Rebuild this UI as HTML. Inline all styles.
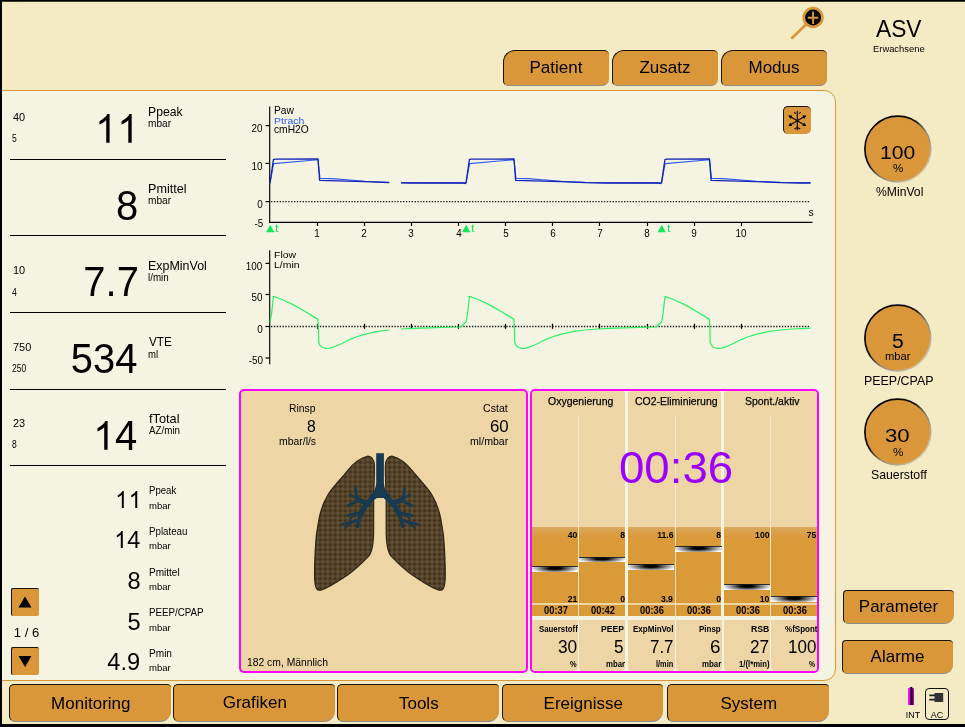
<!DOCTYPE html>
<html><head><meta charset="utf-8"><title>Ventilator</title>
<style>
html,body{margin:0;padding:0;}
body{width:965px;height:727px;overflow:hidden;background:#F4EAC4;font-family:"Liberation Sans",sans-serif;color:#000;position:relative;}
#root{position:absolute;left:0;top:0;width:965px;height:727px;will-change:transform;}
.t{position:absolute;line-height:1;white-space:nowrap;}
.a{position:absolute;}
.btn{position:absolute;box-sizing:border-box;background:#D9973A;border-top:1px solid #1a1408;border-left:1px solid #1a1408;border-right:0 solid #D9973A;border-bottom:1px solid #8f8d88;}
svg{position:absolute;overflow:visible;}
svg.one{position:static;display:inline-block;width:0.5562em;height:0.6904em;vertical-align:baseline;}
</style></head><body><div id="root">
<div class="a" style="left:0;top:0;width:965px;height:2px;background:linear-gradient(to bottom,#000 0,#000 50%,#3d3a2e 50%,#3d3a2e 100%)"></div>
<div class="a" style="left:0;top:0;width:2px;height:727px;background:#000"></div>
<div class="a" style="left:0;top:724px;width:965px;height:3px;background:#000"></div>
<div class="a" style="left:-8px;top:90px;width:842px;height:589px;background:#F5F4E2;border:1px solid #D9973A;border-radius:0 12px 12px 0;"></div>
<div class="a" style="left:0;top:88px;width:2px;height:600px;background:#000"></div>
<div class="btn" style="left:503px;top:50px;width:106px;height:36px;border-radius:12px 5px 7px 5px;"></div>
<div class="t" style="top:59.00px;font-size:17.00px;left:556.00px;transform:translateX(-50%);transform-origin:50% 50%;">Patient</div>
<div class="btn" style="left:612px;top:50px;width:106px;height:36px;border-radius:12px 5px 7px 5px;"></div>
<div class="t" style="top:59.00px;font-size:17.00px;left:665.00px;transform:translateX(-50%);transform-origin:50% 50%;">Zusatz</div>
<div class="btn" style="left:721px;top:50px;width:106px;height:36px;border-radius:12px 5px 7px 5px;"></div>
<div class="t" style="top:59.00px;font-size:17.00px;left:774.00px;transform:translateX(-50%);transform-origin:50% 50%;">Modus</div>
<div class="btn" style="left:843px;top:590px;width:111px;height:34px;border-radius:4px 4px 9px 5px;"></div>
<div class="t" style="top:598.00px;font-size:17.00px;left:898.50px;transform:translateX(-50%);transform-origin:50% 50%;">Parameter</div>
<div class="btn" style="left:842px;top:640px;width:111px;height:34px;border-radius:4px 4px 9px 5px;"></div>
<div class="t" style="top:648.00px;font-size:17.00px;left:897.50px;transform:translateX(-50%);transform-origin:50% 50%;">Alarme</div>
<div class="btn" style="left:9px;top:684px;width:162px;height:38px;border-radius:5px 4px 11px 6px;"></div>
<div class="t" style="top:695.00px;font-size:17.00px;left:90.80px;transform:translateX(-50%);transform-origin:50% 50%;">Monitoring</div>
<div class="btn" style="left:173px;top:684px;width:162px;height:38px;border-radius:5px 4px 11px 6px;"></div>
<div class="t" style="top:694.00px;font-size:17.00px;left:254.80px;transform:translateX(-50%);transform-origin:50% 50%;">Grafiken</div>
<div class="btn" style="left:337px;top:684px;width:162px;height:38px;border-radius:5px 4px 11px 6px;"></div>
<div class="t" style="top:695.00px;font-size:17.00px;left:418.80px;transform:translateX(-50%);transform-origin:50% 50%;">Tools</div>
<div class="btn" style="left:502px;top:684px;width:161px;height:38px;border-radius:5px 4px 11px 6px;"></div>
<div class="t" style="top:695.00px;font-size:17.00px;left:583.30px;transform:translateX(-50%);transform-origin:50% 50%;">Ereignisse</div>
<div class="btn" style="left:667px;top:684px;width:162px;height:38px;border-radius:5px 4px 11px 6px;"></div>
<div class="t" style="top:695.00px;font-size:17.00px;left:748.80px;transform:translateX(-50%);transform-origin:50% 50%;">System</div>
<div class="t" style="top:108.00px;font-size:41.64px;right:825.36px;transform:scaleX(0.960);transform-origin:100% 50%;"><svg class="one" viewBox="0 0 1139 1472"><path transform="translate(0,1472) scale(1,-1)" d="M763 0H583V1147Q518 1085 412.5 1023T223 930V1104Q374 1175 487 1276T647 1472H763Z"/></svg><svg class="one" viewBox="0 0 1139 1472"><path transform="translate(0,1472) scale(1,-1)" d="M763 0H583V1147Q518 1085 412.5 1023T223 930V1104Q374 1175 487 1276T647 1472H763Z"/></svg></div>
<div class="t" style="top:106.00px;font-size:12.83px;left:147.70px;transform:scaleX(0.950);transform-origin:0 50%;">Ppeak</div>
<div class="t" style="top:118.00px;font-size:11.04px;left:148.03px;transform:scaleX(0.916);transform-origin:0 50%;">mbar</div>
<div class="t" style="top:112.00px;font-size:11.40px;left:12.60px;transform:scaleX(0.960);transform-origin:0 50%;">40</div>
<div class="t" style="top:133.00px;font-size:11.40px;left:12.20px;transform:scaleX(0.750);transform-origin:0 50%;">5</div>
<div class="t" style="top:185.00px;font-size:41.64px;right:826.96px;transform:scaleX(0.960);transform-origin:100% 50%;">8</div>
<div class="t" style="top:183.00px;font-size:12.83px;left:147.67px;transform:scaleX(0.981);transform-origin:0 50%;">Pmittel</div>
<div class="t" style="top:195.00px;font-size:11.04px;left:148.03px;transform:scaleX(0.916);transform-origin:0 50%;">mbar</div>
<div class="t" style="top:261.00px;font-size:41.64px;right:825.89px;transform:scaleX(0.960);transform-origin:100% 50%;">7.7</div>
<div class="t" style="top:260.00px;font-size:12.83px;left:147.68px;transform:scaleX(0.971);transform-origin:0 50%;">ExpMinVol</div>
<div class="t" style="top:272.00px;font-size:11.04px;left:148.04px;transform:scaleX(0.888);transform-origin:0 50%;">l/min</div>
<div class="t" style="top:265.00px;font-size:11.40px;left:12.60px;transform:scaleX(0.960);transform-origin:0 50%;">10</div>
<div class="t" style="top:287.00px;font-size:11.40px;left:12.20px;transform:scaleX(0.750);transform-origin:0 50%;">4</div>
<div class="t" style="top:338.00px;font-size:41.64px;right:827.53px;transform:scaleX(0.960);transform-origin:100% 50%;">534</div>
<div class="t" style="top:335.00px;font-size:13.52px;left:148.65px;transform:scaleX(0.866);transform-origin:0 50%;">VTE</div>
<div class="t" style="top:349.00px;font-size:11.04px;left:148.07px;transform:scaleX(0.865);transform-origin:0 50%;">ml</div>
<div class="t" style="top:342.00px;font-size:11.40px;left:12.60px;transform:scaleX(0.960);transform-origin:0 50%;">750</div>
<div class="t" style="top:363.00px;font-size:11.40px;left:12.20px;transform:scaleX(0.750);transform-origin:0 50%;">250</div>
<div class="t" style="top:415.00px;font-size:41.64px;right:827.53px;transform:scaleX(0.960);transform-origin:100% 50%;"><svg class="one" viewBox="0 0 1139 1472"><path transform="translate(0,1472) scale(1,-1)" d="M763 0H583V1147Q518 1085 412.5 1023T223 930V1104Q374 1175 487 1276T647 1472H763Z"/></svg>4</div>
<div class="t" style="top:413.00px;font-size:12.83px;left:148.52px;transform:scaleX(0.995);transform-origin:0 50%;">fTotal</div>
<div class="t" style="top:425.00px;font-size:11.04px;left:148.68px;transform:scaleX(0.888);transform-origin:0 50%;">AZ/min</div>
<div class="t" style="top:418.00px;font-size:11.40px;left:12.60px;transform:scaleX(0.960);transform-origin:0 50%;">23</div>
<div class="t" style="top:439.00px;font-size:11.40px;left:12.20px;transform:scaleX(0.750);transform-origin:0 50%;">8</div>
<div class="a" style="left:10px;top:159px;width:216px;height:1px;background:#000"></div>
<div class="a" style="left:10px;top:235px;width:216px;height:1px;background:#000"></div>
<div class="a" style="left:10px;top:312px;width:216px;height:1px;background:#000"></div>
<div class="a" style="left:10px;top:389px;width:216px;height:1px;background:#000"></div>
<div class="a" style="left:10px;top:465px;width:216px;height:1px;background:#000"></div>
<div class="t" style="top:488.00px;font-size:24.57px;right:823.77px;transform:scaleX(0.960);transform-origin:100% 50%;"><svg class="one" viewBox="0 0 1139 1472"><path transform="translate(0,1472) scale(1,-1)" d="M763 0H583V1147Q518 1085 412.5 1023T223 930V1104Q374 1175 487 1276T647 1472H763Z"/></svg><svg class="one" viewBox="0 0 1139 1472"><path transform="translate(0,1472) scale(1,-1)" d="M763 0H583V1147Q518 1085 412.5 1023T223 930V1104Q374 1175 487 1276T647 1472H763Z"/></svg></div>
<div class="t" style="top:486.00px;font-size:10.35px;left:148.61px;transform:scaleX(0.929);transform-origin:0 50%;">Ppeak</div>
<div class="t" style="top:501.00px;font-size:9.80px;left:148.66px;transform:scaleX(0.976);transform-origin:0 50%;">mbar</div>
<div class="t" style="top:528.00px;font-size:24.57px;right:824.71px;transform:scaleX(0.960);transform-origin:100% 50%;"><svg class="one" viewBox="0 0 1139 1472"><path transform="translate(0,1472) scale(1,-1)" d="M763 0H583V1147Q518 1085 412.5 1023T223 930V1104Q374 1175 487 1276T647 1472H763Z"/></svg>4</div>
<div class="t" style="top:527.00px;font-size:10.35px;left:148.60px;transform:scaleX(0.941);transform-origin:0 50%;">Pplateau</div>
<div class="t" style="top:541.00px;font-size:9.80px;left:148.66px;transform:scaleX(0.976);transform-origin:0 50%;">mbar</div>
<div class="t" style="top:569.00px;font-size:24.57px;right:824.48px;transform:scaleX(0.960);transform-origin:100% 50%;">8</div>
<div class="t" style="top:568.00px;font-size:10.35px;left:148.58px;transform:scaleX(0.970);transform-origin:0 50%;">Pmittel</div>
<div class="t" style="top:582.00px;font-size:9.80px;left:148.66px;transform:scaleX(0.976);transform-origin:0 50%;">mbar</div>
<div class="t" style="top:610.00px;font-size:24.57px;right:824.51px;transform:scaleX(0.960);transform-origin:100% 50%;">5</div>
<div class="t" style="top:608.00px;font-size:10.35px;left:148.60px;transform:scaleX(0.944);transform-origin:0 50%;">PEEP/CPAP</div>
<div class="t" style="top:623.00px;font-size:9.80px;left:148.66px;transform:scaleX(0.976);transform-origin:0 50%;">mbar</div>
<div class="t" style="top:650.00px;font-size:24.57px;right:824.38px;transform:scaleX(0.960);transform-origin:100% 50%;">4.9</div>
<div class="t" style="top:649.00px;font-size:10.35px;left:148.57px;transform:scaleX(0.975);transform-origin:0 50%;">Pmin</div>
<div class="t" style="top:663.00px;font-size:9.80px;left:148.66px;transform:scaleX(0.976);transform-origin:0 50%;">mbar</div>
<div class="btn" style="left:11px;top:588px;width:28px;height:28px;border-radius:2px;border-bottom:0;"></div>
<div class="btn" style="left:11px;top:647px;width:28px;height:28px;border-radius:2px;border-bottom:0;"></div>
<svg style="left:11px;top:588px" width="28" height="28"><path d="M7.5 19.5 L20.5 19.5 L14 8.5 Z" fill="#000"/></svg>
<svg style="left:11px;top:647px" width="28" height="28"><path d="M7.5 9 L20.5 9 L14 20 Z" fill="#000"/></svg>
<div class="t" style="top:626.00px;font-size:13.00px;left:26.50px;transform:translateX(-50%);transform-origin:50% 50%;">1 / 6</div>
<svg style="left:0;top:0" width="965" height="727" viewBox="0 0 965 727"><g stroke="#000" stroke-width="1.15" fill="none"><path d="M269.7 106.5V222.6M269 222.4H812.5"/><path d="M269.7 250.3V364.3"/></g><g stroke="#000" stroke-width="1.2" fill="none"><path d="M265.5 125.6H269.5"/><path d="M265.5 163.4H269.5"/><path d="M265.5 201.6H269.5"/><path d="M265.5 263.4H269.5"/><path d="M265.5 294.5H269.5"/><path d="M265.5 326.5H269.5"/><path d="M265.5 358H269.5"/><path d="M317.5 222V226"/><path d="M317.5 323.8V328.8" stroke-width="1.25"/><path d="M364.5 222V226"/><path d="M364.5 323.8V328.8" stroke-width="1.25"/><path d="M411.5 222V226"/><path d="M411.5 323.8V328.8" stroke-width="1.25"/><path d="M458.5 222V226"/><path d="M458.5 323.8V328.8" stroke-width="1.25"/><path d="M505.5 222V226"/><path d="M505.5 323.8V328.8" stroke-width="1.25"/><path d="M552.5 222V226"/><path d="M552.5 323.8V328.8" stroke-width="1.25"/><path d="M599.5 222V226"/><path d="M599.5 323.8V328.8" stroke-width="1.25"/><path d="M647.5 222V226"/><path d="M647.5 323.8V328.8" stroke-width="1.25"/><path d="M694.5 222V226"/><path d="M694.5 323.8V328.8" stroke-width="1.25"/><path d="M741.5 222V226"/><path d="M741.5 323.8V328.8" stroke-width="1.25"/></g><path d="M271 201.6H810.5" stroke="#1c1c1c" stroke-width="1.3" stroke-dasharray="1.4 1.47" fill="none"/><path d="M271 326.5H810.5" stroke="#1c1c1c" stroke-width="1.3" stroke-dasharray="1.4 1.47" fill="none"/><defs><clipPath id="c1"><rect x="269" y="100" width="120.19999999999999" height="280"/></clipPath><clipPath id="c2"><rect x="401" y="100" width="409.5" height="280"/></clipPath></defs><g clip-path="url(#c1)" fill="none" stroke-linejoin="round"><path d="M270.0 183.2 L273.6 163.6 L318.0 159.7 L320.0 178.4 L332.0 178.6 L365.0 181.3 L389.0 182.4 L410.0 182.8 L466.0 182.9" stroke="#2E5CF0" stroke-width="1.1"/><path d="M270.0 183.2 L273.4 159.6 L275.0 159.1 L318.0 159 L319.6 180.3 L365.0 181.6 L389.0 182.6 L410.0 183 L463.0 183 L466.0 183.6" stroke="#1420B4" stroke-width="1.3"/><path d="M270.0 322.3 L271.5 314 L273.5 296.3 L282.0 299.5 L291.0 303.6 L298.0 307.4 L305.5 311.8 L312.0 315.6 L317.9 319.4 L318.4 330 L318.7 342.3 L320.0 345.5 L322.5 347.5 L325.8 348.4 L330.0 348.1 L334.5 346.7 L342.0 343.5 L349.0 339.8 L356.0 337 L363.6 334.6 L371.0 332.8 L378.0 331.4 L389.0 330 L401.2 329 L414.0 328.3 L435.0 327.6 L459.0 327 L461.5 326.3 L465.5 322.5 L466.0 322.3" stroke="#2CF268" stroke-width="1.25"/><path d="M466.0 183.2 L469.6 163.6 L514.0 159.7 L516.0 178.4 L528.0 178.6 L561.0 181.3 L585.0 182.4 L606.0 182.8 L661.5 182.9" stroke="#2E5CF0" stroke-width="1.1"/><path d="M466.0 183.2 L469.4 159.6 L471.0 159.1 L514.0 159 L515.6 180.3 L561.0 181.6 L585.0 182.6 L606.0 183 L658.5 183 L661.5 183.6" stroke="#1420B4" stroke-width="1.3"/><path d="M466.0 322.3 L467.5 314 L469.5 296.3 L478.0 299.5 L487.0 303.6 L494.0 307.4 L501.5 311.8 L508.0 315.6 L513.9 319.4 L514.4 330 L514.7 342.3 L516.0 345.5 L518.5 347.5 L521.8 348.4 L526.0 348.1 L530.5 346.7 L538.0 343.5 L545.0 339.8 L552.0 337 L559.6 334.6 L567.0 332.8 L574.0 331.4 L585.0 330 L597.2 329 L610.0 328.3 L631.0 327.6 L655.0 327 L657.0 326.3 L661.0 322.5 L661.5 322.3" stroke="#2CF268" stroke-width="1.25"/><path d="M661.5 183.2 L665.1 163.6 L709.5 159.7 L711.5 178.4 L723.5 178.6 L756.5 181.3 L780.5 182.4 L801.5 182.8 L857.0 182.9" stroke="#2E5CF0" stroke-width="1.1"/><path d="M661.5 183.2 L664.9 159.6 L666.5 159.1 L709.5 159 L711.1 180.3 L756.5 181.6 L780.5 182.6 L801.5 183 L854.0 183 L857.0 183.6" stroke="#1420B4" stroke-width="1.3"/><path d="M661.5 322.3 L663.0 314 L665.0 296.3 L673.5 299.5 L682.5 303.6 L689.5 307.4 L697.0 311.8 L703.5 315.6 L709.4 319.4 L709.9 330 L710.2 342.3 L711.5 345.5 L714.0 347.5 L717.3 348.4 L721.5 348.1 L726.0 346.7 L733.5 343.5 L740.5 339.8 L747.5 337 L755.1 334.6 L762.5 332.8 L769.5 331.4 L780.5 330 L792.7 329 L805.5 328.3 L826.5 327.6 L850.5 327 L852.5 326.3 L856.5 322.5 L857.0 322.3" stroke="#2CF268" stroke-width="1.25"/></g><g clip-path="url(#c2)" fill="none" stroke-linejoin="round"><path d="M270.0 183.2 L273.6 163.6 L318.0 159.7 L320.0 178.4 L332.0 178.6 L365.0 181.3 L389.0 182.4 L410.0 182.8 L466.0 182.9" stroke="#2E5CF0" stroke-width="1.1"/><path d="M270.0 183.2 L273.4 159.6 L275.0 159.1 L318.0 159 L319.6 180.3 L365.0 181.6 L389.0 182.6 L410.0 183 L463.0 183 L466.0 183.6" stroke="#1420B4" stroke-width="1.3"/><path d="M270.0 322.3 L271.5 314 L273.5 296.3 L282.0 299.5 L291.0 303.6 L298.0 307.4 L305.5 311.8 L312.0 315.6 L317.9 319.4 L318.4 330 L318.7 342.3 L320.0 345.5 L322.5 347.5 L325.8 348.4 L330.0 348.1 L334.5 346.7 L342.0 343.5 L349.0 339.8 L356.0 337 L363.6 334.6 L371.0 332.8 L378.0 331.4 L389.0 330 L401.2 329 L414.0 328.3 L435.0 327.6 L459.0 327 L461.5 326.3 L465.5 322.5 L466.0 322.3" stroke="#2CF268" stroke-width="1.25"/><path d="M466.0 183.2 L469.6 163.6 L514.0 159.7 L516.0 178.4 L528.0 178.6 L561.0 181.3 L585.0 182.4 L606.0 182.8 L661.5 182.9" stroke="#2E5CF0" stroke-width="1.1"/><path d="M466.0 183.2 L469.4 159.6 L471.0 159.1 L514.0 159 L515.6 180.3 L561.0 181.6 L585.0 182.6 L606.0 183 L658.5 183 L661.5 183.6" stroke="#1420B4" stroke-width="1.3"/><path d="M466.0 322.3 L467.5 314 L469.5 296.3 L478.0 299.5 L487.0 303.6 L494.0 307.4 L501.5 311.8 L508.0 315.6 L513.9 319.4 L514.4 330 L514.7 342.3 L516.0 345.5 L518.5 347.5 L521.8 348.4 L526.0 348.1 L530.5 346.7 L538.0 343.5 L545.0 339.8 L552.0 337 L559.6 334.6 L567.0 332.8 L574.0 331.4 L585.0 330 L597.2 329 L610.0 328.3 L631.0 327.6 L655.0 327 L657.0 326.3 L661.0 322.5 L661.5 322.3" stroke="#2CF268" stroke-width="1.25"/><path d="M661.5 183.2 L665.1 163.6 L709.5 159.7 L711.5 178.4 L723.5 178.6 L756.5 181.3 L780.5 182.4 L801.5 182.8 L857.0 182.9" stroke="#2E5CF0" stroke-width="1.1"/><path d="M661.5 183.2 L664.9 159.6 L666.5 159.1 L709.5 159 L711.1 180.3 L756.5 181.6 L780.5 182.6 L801.5 183 L854.0 183 L857.0 183.6" stroke="#1420B4" stroke-width="1.3"/><path d="M661.5 322.3 L663.0 314 L665.0 296.3 L673.5 299.5 L682.5 303.6 L689.5 307.4 L697.0 311.8 L703.5 315.6 L709.4 319.4 L709.9 330 L710.2 342.3 L711.5 345.5 L714.0 347.5 L717.3 348.4 L721.5 348.1 L726.0 346.7 L733.5 343.5 L740.5 339.8 L747.5 337 L755.1 334.6 L762.5 332.8 L769.5 331.4 L780.5 330 L792.7 329 L805.5 328.3 L826.5 327.6 L850.5 327 L852.5 326.3 L856.5 322.5 L857.0 322.3" stroke="#2CF268" stroke-width="1.25"/></g><path d="M266.1 232.2 L274.3 232.2 L270.2 224.8 Z" fill="#12E85A"/><path d="M462.1 232.2 L470.3 232.2 L466.2 224.8 Z" fill="#12E85A"/><path d="M657.6 232.2 L665.8 232.2 L661.7 224.8 Z" fill="#12E85A"/></svg>
<div class="t" style="top:223.00px;font-size:10.83px;left:275.40px;transform:scaleX(1.193);transform-origin:0 50%;color:#12E85A;">t</div>
<div class="t" style="top:223.00px;font-size:10.83px;left:471.40px;transform:scaleX(1.193);transform-origin:0 50%;color:#12E85A;">t</div>
<div class="t" style="top:223.00px;font-size:10.83px;left:666.90px;transform:scaleX(1.193);transform-origin:0 50%;color:#12E85A;">t</div>
<div class="t" style="top:124.00px;font-size:10.40px;right:702.40px;transform:scaleX(0.950);transform-origin:100% 50%;">20</div>
<div class="t" style="top:162.00px;font-size:10.40px;right:702.40px;transform:scaleX(0.950);transform-origin:100% 50%;">10</div>
<div class="t" style="top:200.00px;font-size:10.40px;right:702.40px;transform:scaleX(0.950);transform-origin:100% 50%;">0</div>
<div class="t" style="top:219.00px;font-size:10.40px;right:702.20px;transform:scaleX(0.950);transform-origin:100% 50%;">-5</div>
<div class="t" style="top:262.00px;font-size:10.40px;right:702.40px;transform:scaleX(0.950);transform-origin:100% 50%;">100</div>
<div class="t" style="top:293.00px;font-size:10.40px;right:702.40px;transform:scaleX(0.950);transform-origin:100% 50%;">50</div>
<div class="t" style="top:325.00px;font-size:10.40px;right:702.40px;transform:scaleX(0.950);transform-origin:100% 50%;">0</div>
<div class="t" style="top:356.00px;font-size:10.40px;right:702.20px;transform:scaleX(0.950);transform-origin:100% 50%;">-50</div>
<div class="t" style="top:229.00px;font-size:10.40px;left:317.35px;transform:translateX(-50%) scaleX(0.950);transform-origin:50% 50%;">1</div>
<div class="t" style="top:229.00px;font-size:10.40px;left:364.40px;transform:translateX(-50%) scaleX(0.950);transform-origin:50% 50%;">2</div>
<div class="t" style="top:229.00px;font-size:10.40px;left:411.45px;transform:translateX(-50%) scaleX(0.950);transform-origin:50% 50%;">3</div>
<div class="t" style="top:229.00px;font-size:10.40px;left:458.50px;transform:translateX(-50%) scaleX(0.950);transform-origin:50% 50%;">4</div>
<div class="t" style="top:229.00px;font-size:10.40px;left:505.55px;transform:translateX(-50%) scaleX(0.950);transform-origin:50% 50%;">5</div>
<div class="t" style="top:229.00px;font-size:10.40px;left:552.60px;transform:translateX(-50%) scaleX(0.950);transform-origin:50% 50%;">6</div>
<div class="t" style="top:229.00px;font-size:10.40px;left:599.65px;transform:translateX(-50%) scaleX(0.950);transform-origin:50% 50%;">7</div>
<div class="t" style="top:229.00px;font-size:10.40px;left:646.70px;transform:translateX(-50%) scaleX(0.950);transform-origin:50% 50%;">8</div>
<div class="t" style="top:229.00px;font-size:10.40px;left:693.75px;transform:translateX(-50%) scaleX(0.950);transform-origin:50% 50%;">9</div>
<div class="t" style="top:229.00px;font-size:10.40px;left:740.80px;transform:translateX(-50%) scaleX(0.950);transform-origin:50% 50%;">10</div>
<div class="t" style="top:208.00px;font-size:10.40px;left:811.00px;transform:translateX(-50%);transform-origin:50% 50%;">s</div>
<div class="t" style="top:106.00px;font-size:10.47px;left:273.56px;transform:scaleX(0.978);transform-origin:0 50%;">Paw</div>
<div class="t" style="top:116.00px;font-size:9.94px;left:273.54px;transform:scaleX(1.057);transform-origin:0 50%;color:#2458FF;">Ptrach</div>
<div class="t" style="top:125.00px;font-size:10.31px;left:273.96px;transform:scaleX(0.994);transform-origin:0 50%;">cmH2O</div>
<div class="t" style="top:250.00px;font-size:9.94px;left:273.54px;transform:scaleX(1.055);transform-origin:0 50%;">Flow</div>
<div class="t" style="top:260.00px;font-size:9.94px;left:273.54px;transform:scaleX(1.055);transform-origin:0 50%;">L/min</div>
<div class="a" style="left:239px;top:389px;width:289px;height:284px;box-sizing:border-box;border:2px solid #FF00FF;border-radius:5px;background:#EDD5A6;"></div>
<div class="t" style="top:404.00px;font-size:10.21px;left:288.95px;transform:scaleX(1.014);transform-origin:0 50%;">Rinsp</div>
<div class="t" style="top:418.00px;font-size:17.04px;left:306.51px;transform:scaleX(0.925);transform-origin:0 50%;">8</div>
<div class="t" style="top:437.00px;font-size:10.49px;left:278.51px;transform:scaleX(0.994);transform-origin:0 50%;">mbar/l/s</div>
<div class="t" style="top:403.00px;font-size:10.60px;left:483.26px;transform:scaleX(1.003);transform-origin:0 50%;">Cstat</div>
<div class="t" style="top:418.00px;font-size:17.04px;left:489.55px;transform:scaleX(0.987);transform-origin:0 50%;">60</div>
<div class="t" style="top:437.00px;font-size:10.49px;left:469.90px;transform:scaleX(1.011);transform-origin:0 50%;">ml/mbar</div>
<div class="t" style="top:658.00px;font-size:10.49px;left:246.61px;transform:scaleX(0.986);transform-origin:0 50%;">182 cm, Männlich</div>
<svg style="left:0;top:0" width="965" height="727" viewBox="0 0 965 727"><defs><pattern id="lp" x="317.7" y="547.2" width="5" height="4.85" patternUnits="userSpaceOnUse"><rect width="5" height="4.85" fill="#594830"/><rect x="1.9" width="1.3" height="4.85" fill="#51401f" opacity=".55"/><rect y="1.8" width="5" height="1.3" fill="#51401f" opacity=".45"/><circle cx="2.5" cy="2.4" r="1.25" fill="#3c2b11"/><circle cx="0" cy="0" r="1.1" fill="#65543a"/><circle cx="5" cy="0" r="1.1" fill="#65543a"/><circle cx="0" cy="4.85" r="1.1" fill="#65543a"/><circle cx="5" cy="4.85" r="1.1" fill="#65543a"/></pattern></defs><path d="M368 456 C360 458 352 465 347.6 470.6 C340 480 333 487 328.4 494 C323 503 320.5 511 318.9 519.6 C316.5 531 315.5 541 315.2 551.5 C314.8 561 314.4 570 314.6 577 C314.8 586 316 591.5 321.5 590 C330 587 339 580.5 347.6 575 C356 569 363 562 368.9 555.8 C372.5 551.5 373.6 541 373.6 530 L373.6 498 C373.8 487 374.6 475 374.4 466 C374.2 460 373 456.5 368 456 Z" fill="url(#lp)" stroke="#2B2416" stroke-width="1.2"/><path d="M368 456 C360 458 352 465 347.6 470.6 C340 480 333 487 328.4 494 C323 503 320.5 511 318.9 519.6 C316.5 531 315.5 541 315.2 551.5 C314.8 561 314.4 570 314.6 577 C314.8 586 316 591.5 321.5 590 C330 587 339 580.5 347.6 575 C356 569 363 562 368.9 555.8 C372.5 551.5 373.6 541 373.6 530 L373.6 498 C373.8 487 374.6 475 374.4 466 C374.2 460 373 456.5 368 456 Z" transform="translate(759.8,0) scale(-1,1)" fill="url(#lp)" stroke="#2B2416" stroke-width="1.2"/><g fill="none" stroke="#173A50" stroke-linecap="round" stroke-linejoin="round"><path d="M377.5 492.5 L364 507.5 L360.2 515" stroke-width="5.4"/><path d="M360.6 514 L358.6 521 L357.4 526.6" stroke-width="3.2"/><path d="M367 503 L358.2 500.3" stroke-width="4.6"/><path d="M358.4 500 L356 494 L355.5 488.2" stroke-width="2.9"/><path d="M357.5 499 L353 496.6 L350.2 494.4" stroke-width="2.1"/><path d="M358 501 L353.4 503 L348.4 505.6" stroke-width="2.8"/><path d="M361.5 513 L354.8 513.7 L347.8 515.4" stroke-width="2.7"/><path d="M354.8 514.5 L350.2 519" stroke-width="1.7"/><path d="M359.2 519.5 L351 522.4 L342.4 524.2" stroke-width="2.7"/><path d="M351.5 523 L344.8 528.2" stroke-width="1.7"/></g><g transform="translate(760,0) scale(-1,1)"><g fill="none" stroke="#173A50" stroke-linecap="round" stroke-linejoin="round"><path d="M377.5 492.5 L364 507.5 L360.2 515" stroke-width="5.4"/><path d="M360.6 514 L358.6 521 L357.4 526.6" stroke-width="3.2"/><path d="M367 503 L358.2 500.3" stroke-width="4.6"/><path d="M358.4 500 L356 494 L355.5 488.2" stroke-width="2.9"/><path d="M357.5 499 L353 496.6 L350.2 494.4" stroke-width="2.1"/><path d="M358 501 L353.4 503 L348.4 505.6" stroke-width="2.8"/><path d="M361.5 513 L354.8 513.7 L347.8 515.4" stroke-width="2.7"/><path d="M354.8 514.5 L350.2 519" stroke-width="1.7"/><path d="M359.2 519.5 L351 522.4 L342.4 524.2" stroke-width="2.7"/><path d="M351.5 523 L344.8 528.2" stroke-width="1.7"/></g></g><path d="M376.2 453.2 H383.9 V483 C384.2 488 386 491.5 390 495.5 L386 499.5 L383.9 498.1 H377.1 L374 499.5 L370 495.5 C374 491.5 375.9 488 376.2 483 Z" fill="#173A50"/></svg>
<div class="a" style="left:530px;top:389px;width:289px;height:284px;box-sizing:border-box;border:2px solid #FF00FF;border-radius:5px;background:#F5F4E2;overflow:hidden;" id="bars">
<div class="a" style="left:0px;top:0px;width:93.29999999999995px;height:229.2px;background:#EDD5A6;border-radius:3px 3px 0 0;"></div>
<div class="a" style="left:0px;top:229.20000000000005px;width:46px;height:50.6px;background:#EDD5A6;border-radius:0 0 4px 4px;"></div>
<div class="a" style="left:47px;top:229.20000000000005px;width:46.299999999999955px;height:50.6px;background:#EDD5A6;border-radius:0 0 4px 4px;"></div>
<div class="a" style="left:0px;top:135.60000000000002px;width:93.29999999999995px;height:76.3px;background:linear-gradient(to bottom,#D9AA62 0px,#DAA24E 4px,#DB9C3E 9px,#DB9A38 13px,#DB9A38 100%);"></div>
<div class="a" style="left:0px;top:213.5px;width:93.29999999999995px;height:11.8px;background:#DB9A38;"></div>
<div class="a" style="left:0px;top:225.29999999999995px;width:93.29999999999995px;height:4px;background:#F5F4E2;"></div>
<div class="a" style="left:46px;top:24.30000000000001px;width:1px;height:205px;background:#F4E6C6;"></div>
<div class="a" style="left:96.29999999999995px;top:0px;width:93.20000000000005px;height:229.2px;background:#EDD5A6;border-radius:3px 3px 0 0;"></div>
<div class="a" style="left:96.29999999999995px;top:229.20000000000005px;width:46.700000000000045px;height:50.6px;background:#EDD5A6;border-radius:0 0 4px 4px;"></div>
<div class="a" style="left:144px;top:229.20000000000005px;width:45.5px;height:50.6px;background:#EDD5A6;border-radius:0 0 4px 4px;"></div>
<div class="a" style="left:96.29999999999995px;top:135.60000000000002px;width:93.20000000000005px;height:76.3px;background:linear-gradient(to bottom,#D9AA62 0px,#DAA24E 4px,#DB9C3E 9px,#DB9A38 13px,#DB9A38 100%);"></div>
<div class="a" style="left:96.29999999999995px;top:213.5px;width:93.20000000000005px;height:11.8px;background:#DB9A38;"></div>
<div class="a" style="left:96.29999999999995px;top:225.29999999999995px;width:93.20000000000005px;height:4px;background:#F5F4E2;"></div>
<div class="a" style="left:143px;top:24.30000000000001px;width:1px;height:205px;background:#F4E6C6;"></div>
<div class="a" style="left:192.20000000000005px;top:0px;width:92.79999999999995px;height:229.2px;background:#EDD5A6;border-radius:3px 3px 0 0;"></div>
<div class="a" style="left:192.20000000000005px;top:229.20000000000005px;width:45.799999999999955px;height:50.6px;background:#EDD5A6;border-radius:0 0 4px 4px;"></div>
<div class="a" style="left:239px;top:229.20000000000005px;width:46px;height:50.6px;background:#EDD5A6;border-radius:0 0 4px 4px;"></div>
<div class="a" style="left:192.20000000000005px;top:135.60000000000002px;width:92.79999999999995px;height:76.3px;background:linear-gradient(to bottom,#D9AA62 0px,#DAA24E 4px,#DB9C3E 9px,#DB9A38 13px,#DB9A38 100%);"></div>
<div class="a" style="left:192.20000000000005px;top:213.5px;width:92.79999999999995px;height:11.8px;background:#DB9A38;"></div>
<div class="a" style="left:192.20000000000005px;top:225.29999999999995px;width:92.79999999999995px;height:4px;background:#F5F4E2;"></div>
<div class="a" style="left:238px;top:24.30000000000001px;width:1px;height:205px;background:#F4E6C6;"></div>
<div class="a" style="left:0px;top:175px;width:46px;height:5.8px;background:#fff;background:radial-gradient(ellipse 55% 85% at 50% 38%, #000 0%, #000 22%, #777 55%, #fff 100%);"></div>
<div class="a" style="left:0px;top:175px;width:46px;height:1px;background:#111;opacity:.85;"></div>
<div class="a" style="left:47px;top:165.60000000000002px;width:46.299999999999955px;height:5.8px;background:#fff;background:radial-gradient(ellipse 55% 85% at 50% 38%, #000 0%, #000 22%, #777 55%, #fff 100%);"></div>
<div class="a" style="left:47px;top:165.60000000000002px;width:46.299999999999955px;height:1px;background:#111;opacity:.85;"></div>
<div class="a" style="left:96.29999999999995px;top:173px;width:45.700000000000045px;height:5.8px;background:#fff;background:radial-gradient(ellipse 55% 85% at 50% 38%, #000 0%, #000 22%, #777 55%, #fff 100%);"></div>
<div class="a" style="left:96.29999999999995px;top:173px;width:45.700000000000045px;height:1px;background:#111;opacity:.85;"></div>
<div class="a" style="left:143px;top:154.79999999999995px;width:46.5px;height:5.8px;background:#fff;background:radial-gradient(ellipse 55% 85% at 50% 38%, #000 0%, #000 22%, #777 55%, #fff 100%);"></div>
<div class="a" style="left:143px;top:154.79999999999995px;width:46.5px;height:1px;background:#111;opacity:.85;"></div>
<div class="a" style="left:192.20000000000005px;top:193px;width:45.799999999999955px;height:5.8px;background:#fff;background:radial-gradient(ellipse 55% 85% at 50% 38%, #000 0%, #000 22%, #777 55%, #fff 100%);"></div>
<div class="a" style="left:192.20000000000005px;top:193px;width:45.799999999999955px;height:1px;background:#111;opacity:.85;"></div>
<div class="a" style="left:239px;top:205.39999999999998px;width:46px;height:5.8px;background:#fff;background:radial-gradient(ellipse 55% 85% at 50% 38%, #000 0%, #000 22%, #777 55%, #fff 100%);"></div>
<div class="a" style="left:239px;top:205.39999999999998px;width:46px;height:1px;background:#111;opacity:.85;"></div>
</div>
<div class="t" style="top:531.00px;font-size:9.30px;right:387.60px;transform:scaleX(0.930);transform-origin:100% 50%;font-weight:bold;">40</div>
<div class="t" style="top:595.00px;font-size:9.30px;right:387.60px;transform:scaleX(0.930);transform-origin:100% 50%;font-weight:bold;">21</div>
<div class="t" style="top:606.00px;font-size:10.00px;left:555.80px;transform:translateX(-50%) scaleX(0.930);transform-origin:50% 50%;font-weight:bold;">00:37</div>
<div class="t" style="top:531.00px;font-size:9.30px;right:340.30px;transform:scaleX(0.930);transform-origin:100% 50%;font-weight:bold;">8</div>
<div class="t" style="top:595.00px;font-size:9.30px;right:340.30px;transform:scaleX(0.930);transform-origin:100% 50%;font-weight:bold;">0</div>
<div class="t" style="top:606.00px;font-size:10.00px;left:602.95px;transform:translateX(-50%) scaleX(0.930);transform-origin:50% 50%;font-weight:bold;">00:42</div>
<div class="t" style="top:531.00px;font-size:9.30px;right:291.60px;transform:scaleX(0.930);transform-origin:100% 50%;font-weight:bold;">11.6</div>
<div class="t" style="top:595.00px;font-size:9.30px;right:291.60px;transform:scaleX(0.930);transform-origin:100% 50%;font-weight:bold;">3.9</div>
<div class="t" style="top:606.00px;font-size:10.00px;left:651.95px;transform:translateX(-50%) scaleX(0.930);transform-origin:50% 50%;font-weight:bold;">00:36</div>
<div class="t" style="top:531.00px;font-size:9.30px;right:244.10px;transform:scaleX(0.930);transform-origin:100% 50%;font-weight:bold;">8</div>
<div class="t" style="top:595.00px;font-size:9.30px;right:244.10px;transform:scaleX(0.930);transform-origin:100% 50%;font-weight:bold;">0</div>
<div class="t" style="top:606.00px;font-size:10.00px;left:699.05px;transform:translateX(-50%) scaleX(0.930);transform-origin:50% 50%;font-weight:bold;">00:36</div>
<div class="t" style="top:531.00px;font-size:9.30px;right:195.60px;transform:scaleX(0.930);transform-origin:100% 50%;font-weight:bold;">100</div>
<div class="t" style="top:595.00px;font-size:9.30px;right:195.60px;transform:scaleX(0.930);transform-origin:100% 50%;font-weight:bold;">10</div>
<div class="t" style="top:606.00px;font-size:10.00px;left:747.90px;transform:translateX(-50%) scaleX(0.930);transform-origin:50% 50%;font-weight:bold;">00:36</div>
<div class="t" style="top:531.00px;font-size:9.30px;right:148.60px;transform:scaleX(0.930);transform-origin:100% 50%;font-weight:bold;">75</div>
<div class="t" style="top:606.00px;font-size:10.00px;left:794.80px;transform:translateX(-50%) scaleX(0.930);transform-origin:50% 50%;font-weight:bold;">00:36</div>
<div class="t" style="top:396.00px;font-size:11.04px;left:547.70px;transform:scaleX(0.951);transform-origin:0 50%;-webkit-text-stroke:0.25px #000;">Oxygenierung</div>
<div class="t" style="top:396.00px;font-size:11.04px;left:635.17px;transform:scaleX(0.948);transform-origin:0 50%;-webkit-text-stroke:0.25px #000;">CO2-Eliminierung</div>
<div class="t" style="top:396.00px;font-size:11.04px;left:744.93px;transform:scaleX(0.947);transform-origin:0 50%;-webkit-text-stroke:0.25px #000;">Spont./aktiv</div>
<div class="t" style="top:446.00px;font-size:44.83px;left:619.02px;transform:scaleX(1.017);transform-origin:0 50%;color:#9A00FF;">00:36</div>
<div class="t" style="top:625.00px;font-size:9.25px;left:538.67px;transform:scaleX(0.847);transform-origin:0 50%;font-weight:bold;">Sauerstoff</div>
<div class="t" style="top:639.00px;font-size:17.47px;left:558.44px;transform:scaleX(0.990);transform-origin:0 50%;">30</div>
<div class="t" style="top:659.00px;font-size:9.49px;left:570.12px;transform:scaleX(0.780);transform-origin:0 50%;font-weight:bold;">%</div>
<div class="t" style="top:624.00px;font-size:9.74px;left:601.22px;transform:scaleX(0.884);transform-origin:0 50%;font-weight:bold;">PEEP</div>
<div class="t" style="top:639.00px;font-size:17.73px;left:614.32px;transform:scaleX(0.963);transform-origin:0 50%;">5</div>
<div class="t" style="top:660.00px;font-size:9.11px;left:605.68px;transform:scaleX(0.859);transform-origin:0 50%;font-weight:bold;">mbar</div>
<div class="t" style="top:625.00px;font-size:9.25px;left:632.86px;transform:scaleX(0.868);transform-origin:0 50%;font-weight:bold;">ExpMinVol</div>
<div class="t" style="top:639.00px;font-size:17.73px;left:649.93px;transform:scaleX(0.954);transform-origin:0 50%;">7.7</div>
<div class="t" style="top:660.00px;font-size:9.11px;left:656.48px;transform:scaleX(0.813);transform-origin:0 50%;font-weight:bold;">l/min</div>
<div class="t" style="top:625.00px;font-size:9.25px;left:699.17px;transform:scaleX(0.860);transform-origin:0 50%;font-weight:bold;">Pinsp</div>
<div class="t" style="top:639.00px;font-size:17.47px;left:710.24px;transform:scaleX(1.079);transform-origin:0 50%;">6</div>
<div class="t" style="top:660.00px;font-size:9.11px;left:701.78px;transform:scaleX(0.868);transform-origin:0 50%;font-weight:bold;">mbar</div>
<div class="t" style="top:624.00px;font-size:9.60px;left:751.42px;transform:scaleX(0.897);transform-origin:0 50%;font-weight:bold;">RSB</div>
<div class="t" style="top:639.00px;font-size:17.47px;left:750.44px;transform:scaleX(0.984);transform-origin:0 50%;">27</div>
<div class="t" style="top:660.00px;font-size:9.11px;left:739.41px;transform:scaleX(0.851);transform-origin:0 50%;font-weight:bold;">1/(l*min)</div>
<div class="t" style="top:625.00px;font-size:9.25px;left:785.00px;transform:scaleX(0.867);transform-origin:0 50%;font-weight:bold;">%fSpont</div>
<div class="t" style="top:639.00px;font-size:17.47px;left:788.11px;transform:scaleX(0.973);transform-origin:0 50%;">100</div>
<div class="t" style="top:659.00px;font-size:9.49px;left:809.43px;transform:scaleX(0.717);transform-origin:0 50%;font-weight:bold;">%</div>
<div class="btn" style="left:783px;top:106px;width:28px;height:28px;border-radius:5px;border-bottom:0;"></div>
<svg style="left:0;top:0" width="965" height="727" viewBox="0 0 965 727"><path d="M806 24.5 L792 37.9" stroke="#D9973A" stroke-width="2.7" stroke-linecap="round"/><circle cx="813.1" cy="17.5" r="9.3" fill="#050402" stroke="#D9973A" stroke-width="2.7"/><path d="M813.1 11.5V24M807.8 17.8H818.3" stroke="#D9973A" stroke-width="1.9"/><g stroke="#0a0804" stroke-width="1.15" fill="none" stroke-linecap="butt"><path d="M797.3 110.8V130.2"/><path d="M797.3 120.8L789.2 116.1"/><path d="M797.3 120.8L805.4 116.1"/><path d="M797.3 120.8L789.2 125.5"/><path d="M797.3 120.8L805.4 125.5"/><path d="M794.2 112.3L796 113.6M800.8 112.4L799 113.6M794.4 129L797.3 127.4L800.2 129" stroke-width="1.1"/></g><path d="M788.34 115.60L792.37 115.62L790.36 119.08ZM806.26 115.60L804.24 119.08L802.23 115.62ZM788.34 126.00L790.36 122.52L792.37 125.98ZM806.26 126.00L802.23 125.98L804.24 122.52Z" fill="#0a0804"/></svg>
<div class="t" style="top:18.00px;font-size:23.63px;left:876.06px;transform:scaleX(0.963);transform-origin:0 50%;">ASV</div>
<div class="t" style="top:44.00px;font-size:9.94px;left:873.33px;transform:scaleX(0.945);transform-origin:0 50%;">Erwachsene</div>
<svg style="left:0;top:0" width="0" height="0"><defs><linearGradient id="kg" x1="0.15" y1="0.15" x2="0.85" y2="0.85"><stop offset="0" stop-color="#000"/><stop offset="0.38" stop-color="#15120c"/><stop offset="0.62" stop-color="#8d8574"/><stop offset="1" stop-color="#cfc4a6"/></linearGradient></defs></svg>
<svg style="left:860px;top:110.6px" width="76" height="76"><circle cx="37.8" cy="38" r="32.9" fill="#D9973A" stroke="url(#kg)" stroke-width="1.7"/></svg>
<div class="t" style="top:143.00px;font-size:19.05px;left:879.99px;transform:scaleX(1.109);transform-origin:0 50%;">100</div>
<div class="t" style="top:163.00px;font-size:11.24px;left:893.09px;transform:scaleX(1.033);transform-origin:0 50%;">%</div>
<div class="t" style="top:186.00px;font-size:12.01px;left:876.07px;transform:scaleX(1.014);transform-origin:0 50%;">%MinVol</div>
<svg style="left:860px;top:299.6px" width="76" height="76"><circle cx="37.8" cy="38" r="32.9" fill="#D9973A" stroke="url(#kg)" stroke-width="1.7"/></svg>
<div class="t" style="top:332.00px;font-size:19.33px;left:891.66px;transform:scaleX(1.091);transform-origin:0 50%;">5</div>
<div class="t" style="top:351.00px;font-size:10.76px;left:885.26px;transform:scaleX(1.037);transform-origin:0 50%;">mbar</div>
<div class="t" style="top:375.00px;font-size:12.01px;left:863.78px;transform:scaleX(1.035);transform-origin:0 50%;">PEEP/CPAP</div>
<svg style="left:860px;top:394.1px" width="76" height="76"><circle cx="37.8" cy="38" r="32.9" fill="#D9973A" stroke="url(#kg)" stroke-width="1.7"/></svg>
<div class="t" style="top:426.00px;font-size:19.05px;left:885.15px;transform:scaleX(1.166);transform-origin:0 50%;">30</div>
<div class="t" style="top:447.00px;font-size:11.24px;left:893.09px;transform:scaleX(1.033);transform-origin:0 50%;">%</div>
<div class="t" style="top:469.00px;font-size:12.02px;left:870.94px;transform:scaleX(1.023);transform-origin:0 50%;">Sauerstoff</div>
<div class="a" style="left:908px;top:686.6px;width:6px;height:18.6px;background:linear-gradient(to right,#FF12FF 0%,#F000F0 28%,#2a002a 48%,#000 60%,#7a007a 82%,#C414C4 100%);clip-path:polygon(0 12%,50% 0,100% 12%,100% 100%,0 100%);"></div>
<div class="a" style="left:925px;top:688px;width:24px;height:32px;box-sizing:border-box;border:1.3px solid #111;border-radius:4px;"></div>
<svg style="left:0;top:0" width="965" height="727"><path d="M934.5 693H943.2V702H934.5Z" fill="#333"/><path d="M929.3 695.4H935M929.3 699.6H935" stroke="#1a2030" stroke-width="1.8"/></svg>
<div class="t" style="top:710.00px;font-size:9.40px;left:913.20px;transform:translateX(-50%) scaleX(0.950);transform-origin:50% 50%;">INT</div>
<div class="t" style="top:710.00px;font-size:9.40px;left:937.30px;transform:translateX(-50%) scaleX(0.950);transform-origin:50% 50%;">AC</div>
</div></body></html>
